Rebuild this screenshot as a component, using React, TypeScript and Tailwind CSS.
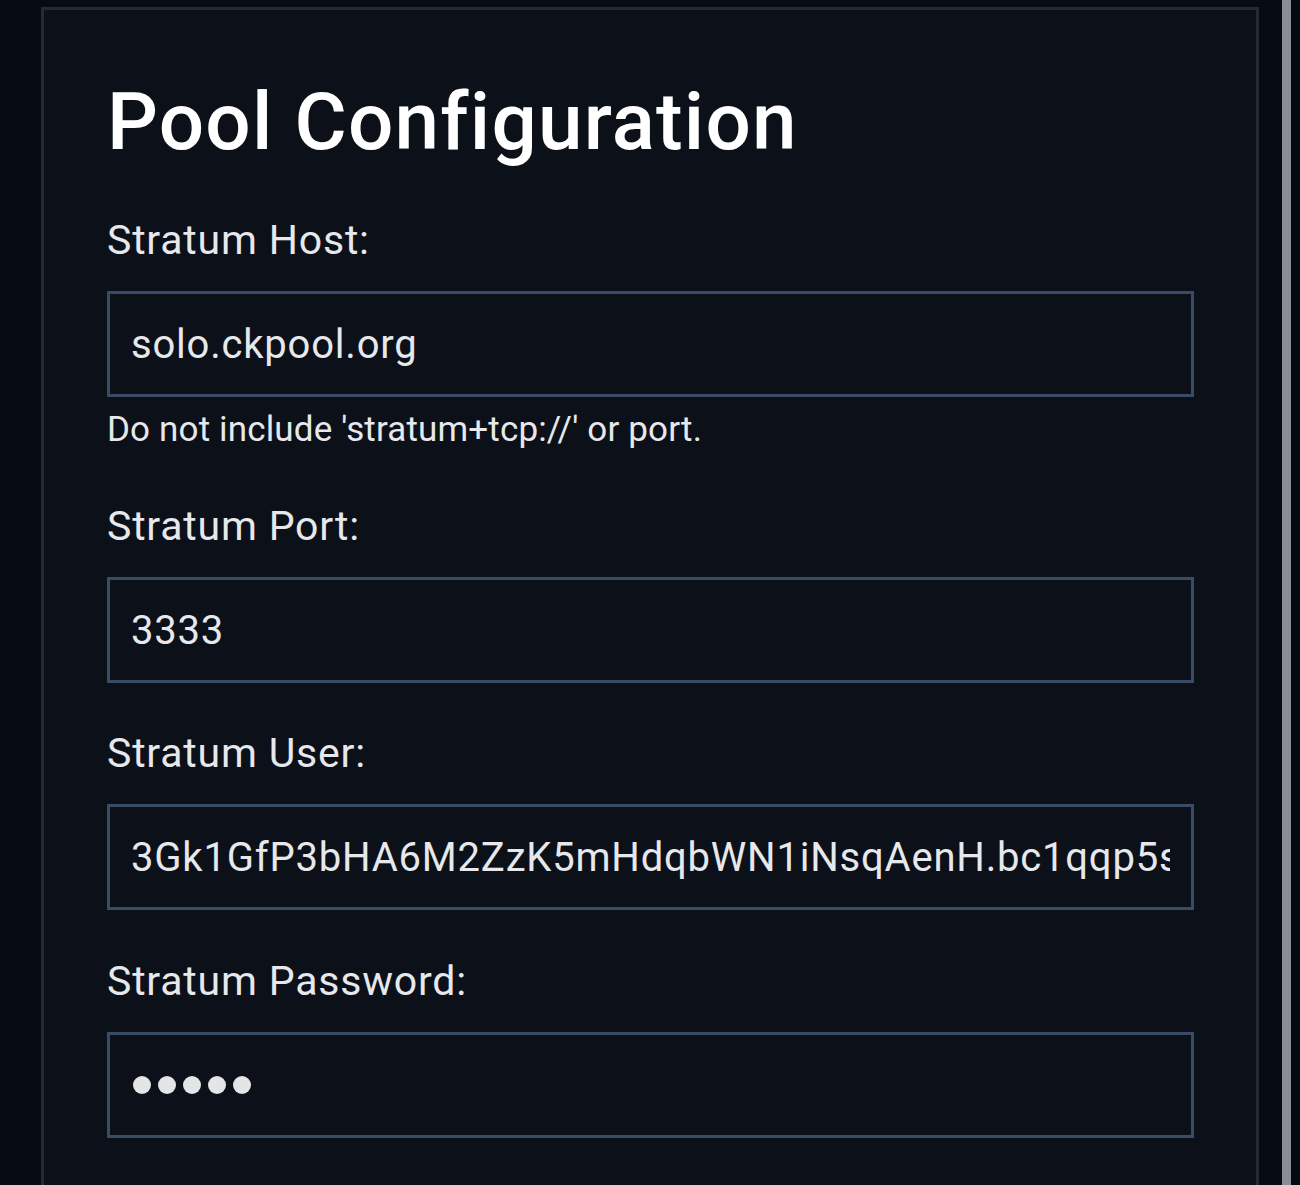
import React from "react";

const FIELDS = [
  { id: "host", label: "Stratum Host:", value: "solo.ckpool.org", gap: "", hint: "Do not include 'stratum+tcp://' or port." },
  { id: "port", label: "Stratum Port:", value: "3333", gap: "mt-[59px]" },
  { id: "user", label: "Stratum User:", value: "3Gk1GfP3bHA6M2ZzK5mHdqbWN1iNsqAenH.bc1qqp5s8vlz0h2ks3r4y7", gap: "mt-[50px]" },
  { id: "pass", label: "Stratum Password:", value: "", gap: "mt-[51px]", secret: 5 },
];

export default function App() {
  return (
    <div
      className="flex h-[1185px] overflow-hidden bg-[#070b12] text-[#e6e8ec]"
      style={{ fontFamily: "Roboto, 'Liberation Sans', sans-serif" }}
    >
      <div className="w-[1282px] shrink-0 pl-[41px] pr-[23px] pt-[7px]">
        <section className="min-h-[1300px] border-[3px] border-[#242b35] bg-[#0b1019] pl-[63px] pr-[62px] pt-[72px]">
          <h1 className="text-[80px] font-medium leading-none tracking-[1.2px] text-white">Pool Configuration</h1>

          <div className="mt-[58px] flex flex-col">
            {FIELDS.map((f) => (
              <div key={f.id} className={f.gap}>
                <label htmlFor={f.id} className="block text-[41px] leading-none tracking-[0.8px]">
                  {f.label}
                </label>
                {f.secret ? (
                  <div
                    id={f.id}
                    className="mt-[30px] flex h-[106px] w-full items-center gap-[7px] border-[3px] border-[#3a4b67] bg-[#0b1019] px-[23px]"
                  >
                    {Array.from({ length: f.secret }).map((_, k) => (
                      <span key={k} className="h-[18px] w-[18px] rounded-full bg-[#e4e5e7]" />
                    ))}
                  </div>
                ) : (
                  <input
                    id={f.id}
                    type="text"
                    readOnly
                    value={f.value}
                    className="mt-[30px] block h-[106px] w-full border-[3px] border-[#3a4b67] bg-[#0b1019] px-[21px] text-[40px] tracking-[0.8px] text-[#e6e8ec] outline-none"
                  />
                )}
                {f.hint && <p className="mt-[15px] text-[35px] leading-none tracking-[0.15px]">{f.hint}</p>}
              </div>
            ))}
          </div>
        </section>
      </div>
      <div className="w-[9px] shrink-0 bg-[#8a8d95]" />
      <div className="flex-1 bg-[#050a12]" />
    </div>
  );
}
